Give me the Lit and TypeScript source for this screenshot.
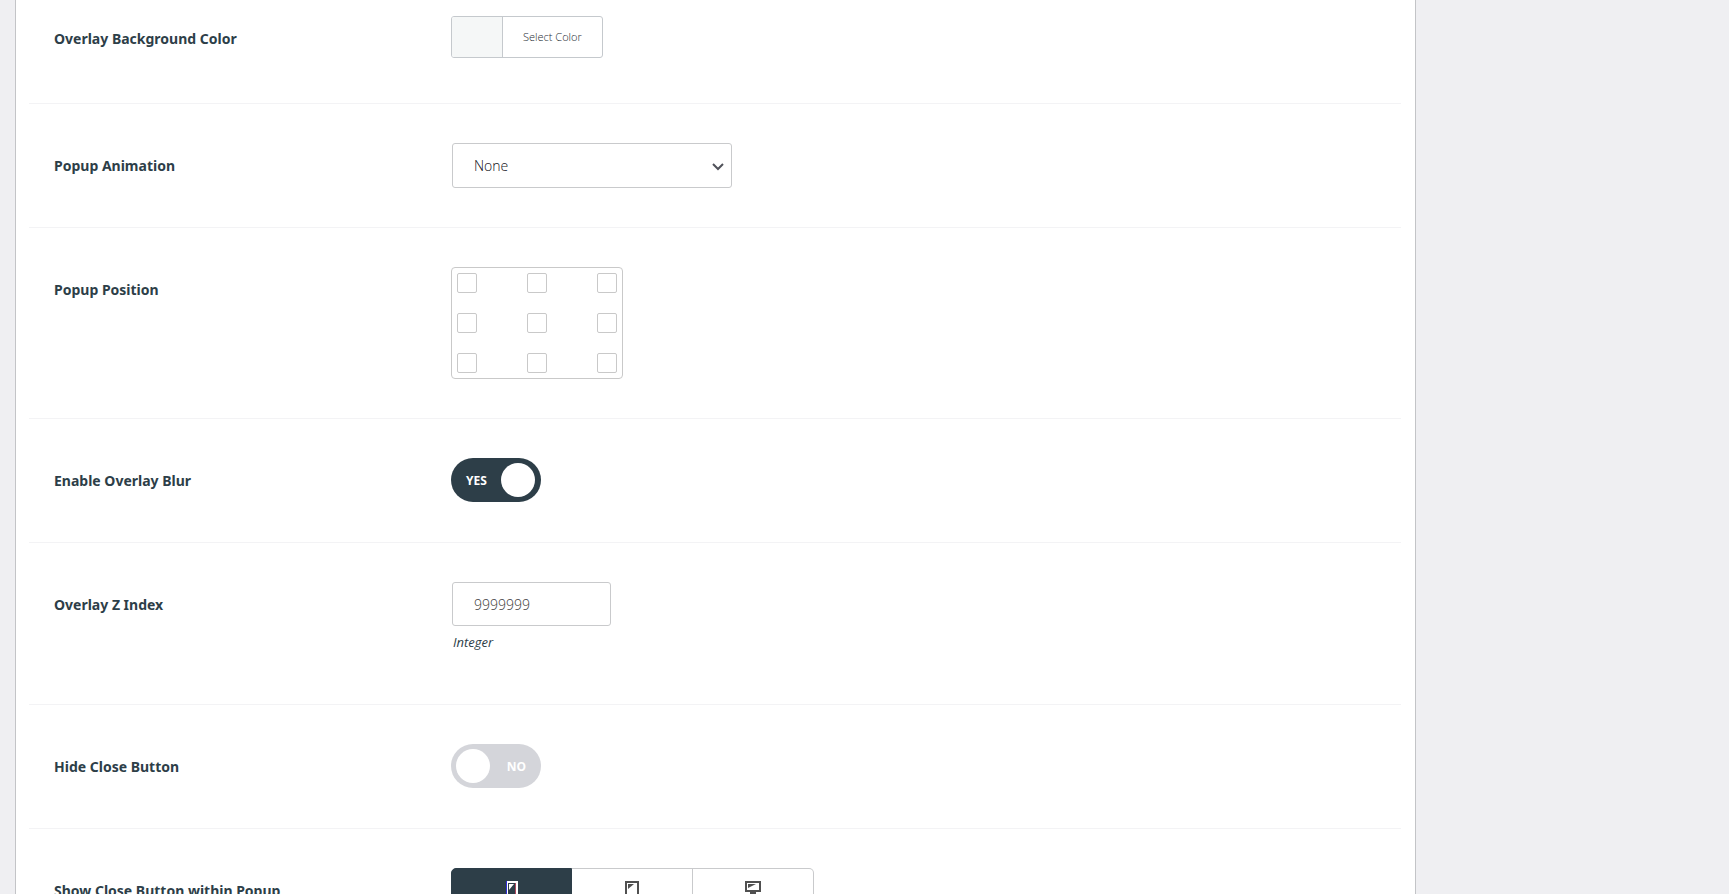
import { LitElement, html, css, svg } from "lit";
import { customElement, state } from "lit/decorators.js";

@customElement("app-root")
export class AppRoot extends LitElement {
  static styles = css`
    :host {
      display: block;
      height: 100vh;
      overflow-y: auto;
      scrollbar-width: none;
      background: #efeff2;
      color: #2d3e48;
      font-family: "Open Sans", "Noto Sans", sans-serif;
      font-size: 14px;
    }
    * { box-sizing: border-box; }
    .panel {
      margin: 0 313px 0 15px;
      padding: 0 14px 40px 13px;
      background: #fff;
      border: solid #c3c4c7;
      border-width: 0 1px;
    }
    .row {
      display: grid;
      grid-template-columns: 397px 1fr;
      padding: 39px 0 39px 25px;
      border-bottom: 1px solid #f3f3f5;
    }
    .row.first { padding-top: 16px; }
    .row.first .control { min-height: 48px; }
    .row:last-child { border-bottom: 0; }
    .label {
      font-family: "Noto Sans", "Open Sans", sans-serif;
      font-size: 14px;
      font-weight: 700;
      line-height: 45px;
    }
    .control { min-height: 45px; }
    button, select, input { font-family: inherit; color: inherit; margin: 0; }
    .color {
      display: flex;
      height: 42px;
      padding: 0;
      border: 1px solid #c5c9cd;
      border-radius: 3px;
      background: #fff;
      color: #1c2830;
      font-size: 11px;
      font-weight: 300;
      line-height: 40px;
      overflow: hidden;
    }
    .swatch { width: 51px; background: #f5f7f7; border-right: 1px solid #c5c9cd; }
    .pick { padding: 0 20px; }
    .field {
      display: block;
      height: 44px;
      margin-left: 1px;
      padding: 0 21px;
      border: 1px solid #c9cacc;
      border-radius: 3px;
      background: #fff;
      font-size: 14px;
      font-weight: 300;
    }
    .select { position: relative; width: 281px; }
    .select select { width: 280px; height: 45px; appearance: none; color: #101020; }
    .chevron { position: absolute; right: 7px; top: 17px; pointer-events: none; }
    .number { width: 159px; }
    .number::placeholder { color: #404040; opacity: 1; }
    .hint { margin: 6px 0 0 2px; font-size: 13px; font-style: italic; line-height: 20px; height: 33px; }
    .positions {
      display: inline-grid;
      vertical-align: top;
      grid-template-columns: repeat(3, 20px);
      gap: 20px 50px;
      padding: 5px;
      border: 1px solid #c9c9c9;
      border-radius: 4px;
    }
    .positions input {
      appearance: none;
      width: 20px;
      height: 20px;
      border: 1px solid #c9c9c9;
      border-radius: 2px;
      background: #fff;
    }
    .positions input:checked { background: #2d3e48; }
    .switch {
      display: flex;
      align-items: center;
      justify-content: space-between;
      width: 90px;
      height: 44px;
      padding: 0 6px 0 15px;
      border-radius: 22px;
      background: #2d3e48;
      color: #fff;
      font-size: 12px;
      font-weight: 700;
    }
    .switch::after { content: ""; width: 34px; height: 34px; border-radius: 50%; background: #fff; }
    .switch.off { flex-direction: row-reverse; padding: 0 15px 0 5px; background: #d4d5da; }
    .switch input { position: absolute; opacity: 0; }
    .devices { display: inline-flex; vertical-align: top; }
    .device {
      display: flex;
      justify-content: center;
      width: 121px;
      height: 46px;
      padding: 12px 0;
      border: 1px solid #c9cacc;
      border-left-width: 0;
      background: #fff;
      color: #505050;
    }
    .device:first-child { border-left-width: 1px; border-radius: 5px 0 0 5px; }
    .device:last-child { border-radius: 0 5px 5px 0; }
    .device.active { background: #2d3e48; border-color: #2d3e48; color: #fff; }
  `;

  @state() private position = -1;
  @state() private blur = true;
  @state() private hideClose = false;
  @state() private device = 0;

  private toggle(id: string, on: boolean, change: (v: boolean) => void) {
    return html`<label class="switch ${on ? "" : "off"}">
      <input id=${id} type="checkbox" role="switch" .checked=${on}
        @change=${(e: Event) => change((e.target as HTMLInputElement).checked)} />
      <span>${on ? "YES" : "NO"}</span>
    </label>`;
  }

  private icons = [
    svg`<path fill="currentColor" d="M3 0h12v18H3z"/><path fill="#2d3e48" d="M5 2h7v12H5z"/><path fill="currentColor" d="M6 3h5L6 9z"/><path fill="none" stroke="#3030d8" d="M3.5 0v18"/><path fill="none" stroke="#b04860" d="M12.5 2v12"/>`,
    svg`<path fill="currentColor" fill-rule="evenodd" d="M2 0h14v18H2zM4 2v13h10V2z"/><path fill="currentColor" d="M5 3h6L5 8z"/>`,
    svg`<path fill="currentColor" fill-rule="evenodd" d="M1 0h16v11h-5v2h2v2H4v-2h2v-2H1zM3 2v7h12V2z"/><path fill="currentColor" d="M4 3h8L4 7z"/>`,
  ];

  render() {
    const names = ["Phone", "Tablet", "Desktop"];
    const spots = ["Top left", "Top center", "Top right", "Middle left", "Center", "Middle right", "Bottom left", "Bottom center", "Bottom right"];
    return html`<main class="panel">
      <div class="row first">
        <label class="label" for="color">Overlay Background Color</label>
        <div class="control">
          <button id="color" class="color"><span class="swatch"></span><span class="pick">Select Color</span></button>
        </div>
      </div>
      <div class="row">
        <label class="label" for="animation">Popup Animation</label>
        <div class="control select">
          <select id="animation" class="field"><option>None</option><option>Fade</option></select>
          <svg class="chevron" width="14" height="14" viewBox="0 0 14 14" fill="none" stroke="#50525a" stroke-width="2"><path d="M2 4l5 5 5-5" /></svg>
        </div>
      </div>
      <div class="row">
        <span class="label" id="position">Popup Position</span>
        <div class="control">
          <div class="positions" role="radiogroup" aria-labelledby="position">
            ${spots.map((s, i) => html`<input type="radio" name="position" aria-label=${s} .checked=${this.position === i} @change=${() => (this.position = i)} />`)}
          </div>
        </div>
      </div>
      <div class="row">
        <label class="label" for="blur">Enable Overlay Blur</label>
        <div class="control">${this.toggle("blur", this.blur, (v) => (this.blur = v))}</div>
      </div>
      <div class="row">
        <label class="label" for="zindex">Overlay Z Index</label>
        <div class="control">
          <input id="zindex" class="field number" type="text" inputmode="numeric" placeholder="9999999" aria-describedby="zhint" />
          <p class="hint" id="zhint">Integer</p>
        </div>
      </div>
      <div class="row">
        <label class="label" for="close">Hide Close Button</label>
        <div class="control">${this.toggle("close", this.hideClose, (v) => (this.hideClose = v))}</div>
      </div>
      <div class="row">
        <span class="label" id="within">Show Close Button within Popup</span>
        <div class="control">
          <div class="devices" role="group" aria-labelledby="within">
            ${this.icons.map((icon, i) => html`<button class="device ${this.device === i ? "active" : ""}" aria-label=${names[i]} @click=${() => (this.device = i)}>
              <svg width="18" height="18" viewBox="0 0 18 18">${icon}</svg>
            </button>`)}
          </div>
        </div>
      </div>
    </main>`;
  }
}
